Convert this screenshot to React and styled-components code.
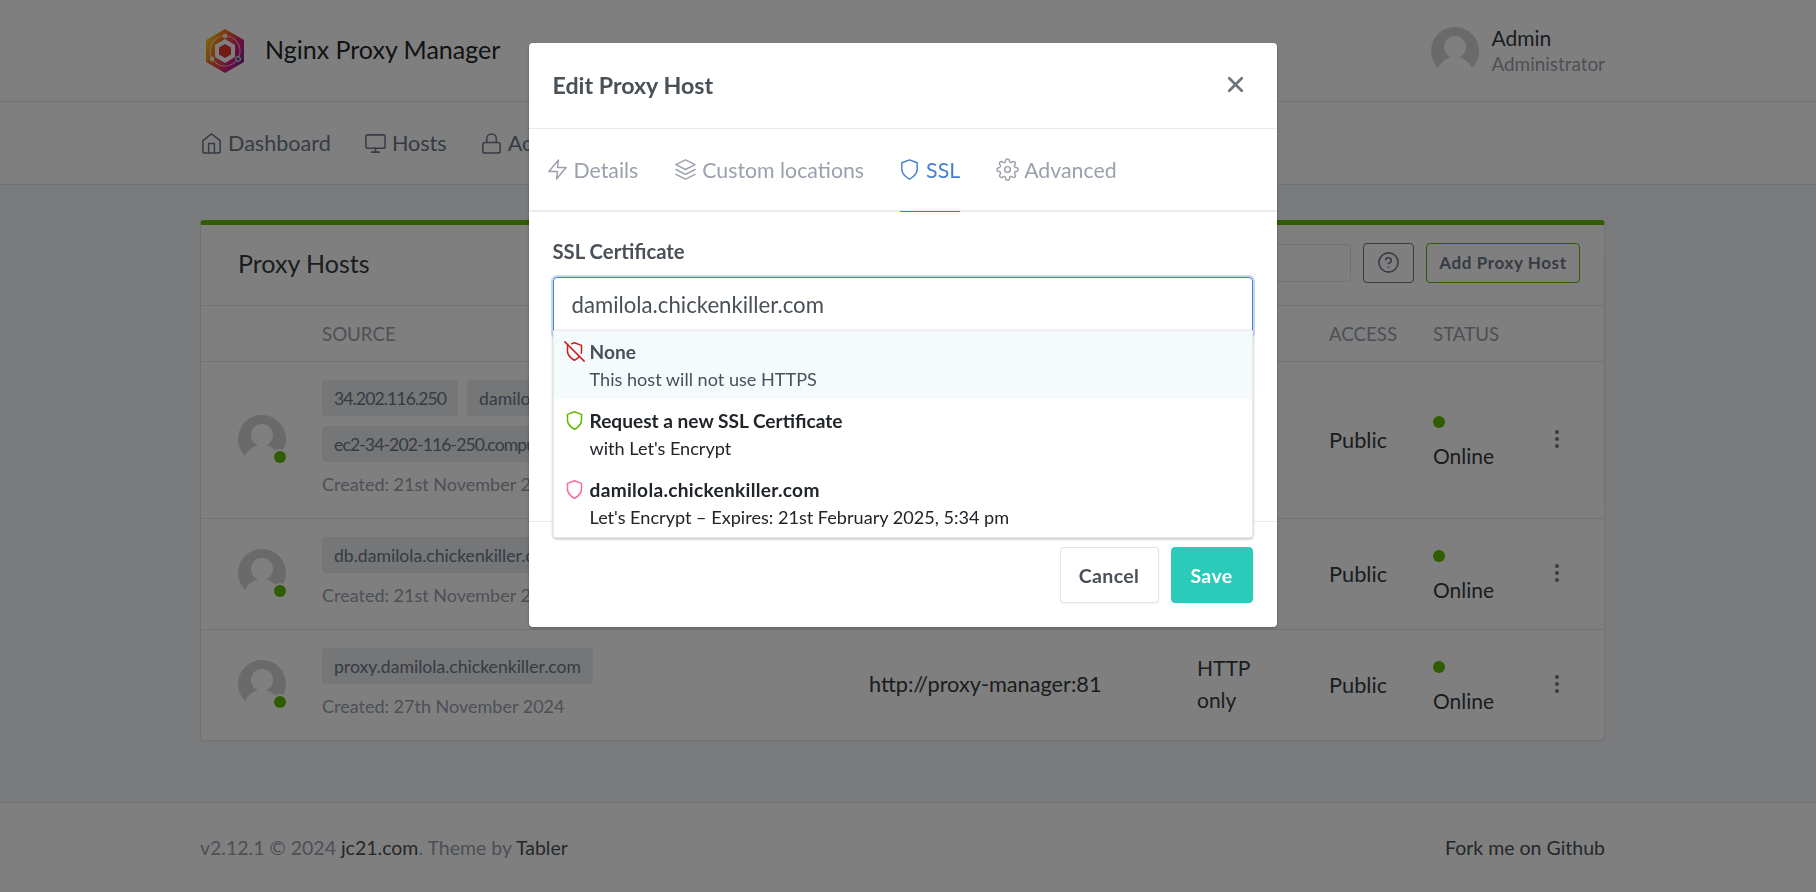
import React from "react";
import styled, { createGlobalStyle } from "styled-components";
import {
  FiHome,
  FiMonitor,
  FiLock,
  FiShield,
  FiUsers,
  FiBook,
  FiSettings,
  FiZap,
  FiLayers,
  FiShieldOff,
  FiX,
  FiHelpCircle,
  FiMoreVertical,
} from "react-icons/fi";

const GlobalStyle = createGlobalStyle`
  * { box-sizing: border-box; }
  html, body { margin: 0; height: 100%; overflow: hidden; }
  body {
    background: #f5f7fb;
    color: #495057;
    font-family: "Lato", "Noto Sans", sans-serif;
    font-size: 17.5px;
  }
`;

const Page = styled.div`
  min-height: 892px;
  display: flex;
  flex-direction: column;
`;

const Container = styled.div`
  padding: 0 211px 0 200px;
  display: flex;
  align-items: center;
  justify-content: space-between;
  width: 100%;
`;

const Header = styled.header`
  height: 102px;
  background: #fff;
  border-bottom: 1px solid rgba(0, 40, 100, 0.12);
  display: flex;
`;

const Brand = styled.div`
  display: flex;
  align-items: center;
  gap: 19px;
  margin-left: 4px;
  font-size: 25px;
  color: #212529;
`;

const BrandName = styled.span`
  margin-bottom: 4px;
`;

const User = styled.div`
  display: flex;
  align-items: center;
  gap: 12px;
`;

const UserName = styled.div`
  font-size: 21px;
  line-height: 26px;
  color: #343a40;
`;

const UserRole = styled.div`
  font-size: 18.9px;
  line-height: 26px;
  color: #9aa0ac;
`;

const Nav = styled.nav`
  height: 83px;
  background: #fff;
  border-bottom: 1px solid rgba(0, 40, 100, 0.12);
  display: flex;
`;

const NavList = styled.div`
  display: flex;
  align-items: center;
  gap: 33px;
  height: 74px;
  font-size: 21.6px;
  color: #6e7687;
`;

const NavItem = styled.span`
  display: flex;
  align-items: center;
  gap: 5px;
  white-space: nowrap;
  svg { width: 23px; height: 23px; stroke-width: 1.6; }
`;

const Main = styled.main`
  padding: 35px 211px 0 200px;
`;

const Card = styled.section`
  height: 521px;
  background: #fff;
  border: 1px solid rgba(0, 40, 100, 0.12);
  border-top: 5px solid #5eba00;
  border-radius: 4px;
  box-shadow: 0 1px 2px rgba(0, 0, 0, 0.05);
`;

const CardHead = styled.div`
  height: 81px;
  display: flex;
  align-items: center;
  justify-content: space-between;
  padding: 0 24px 4px 37px;
  border-bottom: 1px solid rgba(0, 40, 100, 0.12);
`;

const CardTitle = styled.h3`
  margin: 0;
  font-size: 25px;
  font-weight: 400;
  color: #343a40;
`;

const Tools = styled.div`
  display: flex;
  align-items: center;
  gap: 12px;
`;

const Search = styled.div`
  width: 200px;
  height: 38px;
  border: 1px solid rgba(0, 40, 100, 0.12);
  border-radius: 4px;
`;

const ToolButton = styled.div`
  height: 40px;
  width: ${(p) => p.$width}px;
  padding-bottom: 2px;
  display: flex;
  align-items: center;
  justify-content: center;
  border: 1px solid ${(p) => p.$border};
  border-radius: 4px;
  color: #6e7687;
  font-size: 17px;
  font-weight: 700;
  letter-spacing: 0.6px;
  svg { width: 23px; height: 23px; stroke-width: 1.7; }
`;

const columns = "121px 547px 328px 132px 104px 1fr";

const TableHead = styled.div`
  height: 56px;
  display: grid;
  grid-template-columns: ${columns};
  align-items: center;
  border-bottom: 1px solid rgba(0, 40, 100, 0.12);
  font-size: 18.7px;
  color: #9aa0ac;
`;

const HeadCell = styled.div`
  text-transform: uppercase;
`;

const Row = styled.div`
  display: grid;
  grid-template-columns: ${columns};
  align-items: center;
  padding: 18px 0 20px;
  border-bottom: ${(p) => (p.$last ? "none" : "1px solid rgba(0, 40, 100, 0.12)")};
  color: #343a40;
  font-size: 21px;
`;

const AvatarCell = styled.div`
  padding-left: 37px;
`;

const AvatarWrap = styled.div`
  position: relative;
  width: 48px;
  height: 48px;
`;

const AvatarDot = styled.span`
  position: absolute;
  right: 0;
  bottom: 0;
  width: 12px;
  height: 12px;
  border-radius: 50%;
  background: #5eba00;
  box-shadow: 0 0 0 2px #fff;
`;

const Badges = styled.div`
  display: flex;
  flex-wrap: wrap;
  gap: 10px 9px;
  margin-bottom: 9px;
`;

const Badge = styled.span`
  height: 36px;
  padding: 0 12px;
  display: flex;
  align-items: center;
  background: #e9ecef;
  border-radius: 4px;
  color: #6e7687;
  font-size: 17.6px;
  letter-spacing: ${(p) => (p.$tight ? "-0.9px" : "0")};
  white-space: nowrap;
`;

const Created = styled.div`
  line-height: 27px;
  font-size: 18px;
  color: #9aa0ac;
`;

const Target = styled.div`
  font-size: 21.7px;
`;

const Access = styled.div`
  font-size: 21.8px;
`;

const StatusCell = styled.div`
  display: grid;
  grid-template-columns: 112px 1fr;
  align-items: center;
`;

const Status = styled.div`
  padding-top: 5px;
`;

const StatusDot = styled.span`
  display: block;
  width: 12px;
  height: 12px;
  margin-bottom: 17px;
  border-radius: 50%;
  background: #5eba00;
`;

const StatusText = styled.div`
  line-height: 22px;
`;

const Wrapped = styled.div`
  line-height: 32px;
  width: 60px;
`;

const RowMenu = styled.div`
  color: #6e7687;
  display: flex;
  svg { width: 24px; height: 24px; }
`;

const Footer = styled.footer`
  margin-top: auto;
  height: 90px;
  background: #fff;
  border-top: 1px solid rgba(0, 40, 100, 0.12);
  display: flex;
  font-size: 19.5px;
  color: #9aa0ac;
`;

const FooterLink = styled.span`
  color: #495057;
`;

const Backdrop = styled.div`
  position: fixed;
  inset: 0;
  padding: 43px 11px 0 0;
  display: flex;
  justify-content: center;
  align-items: flex-start;
  background: rgba(0, 0, 0, 0.5);
`;

const Modal = styled.div`
  position: relative;
  width: 748px;
  height: 584px;
  display: flex;
  flex-direction: column;
  background: #fff;
  border-radius: 4px;
  box-shadow: 0 1px 3px rgba(0, 0, 0, 0.3);
`;

const ModalHead = styled.div`
  height: 86px;
  flex-shrink: 0;
  display: flex;
  align-items: center;
  justify-content: space-between;
  padding: 0 24px 2px;
  border-bottom: 1px solid #e9ecef;
`;

const ModalTitle = styled.h5`
  margin: 0;
  font-size: 23.2px;
  font-weight: 700;
  color: #495057;
`;

const CloseIcon = styled(FiX)`
  width: 25px;
  height: 25px;
  stroke-width: 2.6;
  color: #6c757d;
  margin-right: 5px;
`;

const Tabs = styled.div`
  height: 83px;
  flex-shrink: 0;
  display: flex;
  gap: 36px;
  padding-left: 17px;
  border-bottom: 2px solid #e9ecef;
`;

const Tab = styled.div`
  height: 83px;
  display: flex;
  align-items: center;
  gap: 5px;
  padding-bottom: 1px;
  font-size: 21.3px;
  color: ${(p) => (p.$active ? "#467fcf" : "#9aa0ac")};
  border-bottom: 1px solid ${(p) => (p.$active ? "#467fcf" : "transparent")};
  svg {
    width: 23px;
    height: 23px;
    stroke-width: 1.5;
    margin-left: ${(p) => (p.$active ? "-2px" : "0")};
  }
`;

const ModalBody = styled.div`
  position: relative;
  flex: 1;
  padding: 24px 24px 0;
  border-bottom: 1px solid #e9ecef;
`;

const Label = styled.div`
  font-size: 20.3px;
  font-weight: 700;
  line-height: 30px;
  margin-bottom: 11px;
  color: #495057;
`;

const SelectControl = styled.div`
  height: 60px;
  padding: 0 0 6px 18px;
  display: flex;
  align-items: center;
  border: 1px solid #467fcf;
  border-radius: 4px;
  box-shadow: 0 0 0 2px rgba(70, 127, 207, 0.3);
  font-size: 22.2px;
  color: #495057;
`;

const Dropdown = styled.div`
  position: absolute;
  top: 118px;
  left: 24px;
  right: 24px;
  background: #fff;
  border: 1px solid #e9ecef;
  border-radius: 0 0 4px 4px;
  box-shadow: 0 1px 3px rgba(0, 0, 0, 0.3);
`;

const Option = styled.div`
  height: ${(p) => (p.$active ? "68px" : "69px")};
  display: flex;
  gap: 3px;
  padding: ${(p) => (p.$active ? "8px" : "9px")} 0 0 10px;
  background: ${(p) => (p.$active ? "#f5fafd" : "#fff")};
  color: ${(p) => (p.$active ? "#495057" : "#212529")};
  svg { width: 21px; height: 21px; margin-top: 2px; stroke-width: 1.7; flex-shrink: 0; }
`;

const OptionTitle = styled.div`
  font-size: 19.1px;
  font-weight: 700;
  line-height: 26px;
  padding-left: 2px;
  letter-spacing: ${(p) => (p.$wide ? "0.3px" : "0")};
`;

const OptionSub = styled.div`
  font-size: 18.1px;
  line-height: 28px;
  padding-left: 2px;
`;

const ModalFooter = styled.div`
  height: 105px;
  flex-shrink: 0;
  display: flex;
  justify-content: flex-end;
  gap: 12px;
  padding: 25px 24px 0;
`;

const FooterButton = styled.div`
  height: 56px;
  width: ${(p) => p.$width}px;
  display: flex;
  align-items: center;
  justify-content: center;
  border-radius: 4px;
  font-size: 19.5px;
  font-weight: 700;
  letter-spacing: 0.4px;
  color: ${(p) => (p.$primary ? "#fff" : "#495057")};
  background: ${(p) => (p.$primary ? "#2bcbba" : "#fff")};
  border: 1px solid ${(p) => (p.$primary ? "#2bcbba" : "rgba(0, 40, 100, 0.12)")};
  box-shadow: 0 1px 2px rgba(0, 0, 0, 0.05);
`;

const Logo = () => (
  <svg width="42" height="46" viewBox="0 0 40 46">
    <defs>
      <linearGradient id="logoGrad" x1="0" y1="0.2" x2="1" y2="0.8">
        <stop offset="0" stopColor="#f5d90a" />
        <stop offset="0.35" stopColor="#f5631f" />
        <stop offset="0.7" stopColor="#d81b7a" />
        <stop offset="1" stopColor="#6a2c9c" />
      </linearGradient>
    </defs>
    <polygon points="20,1 39,12 39,34 20,45 1,34 1,12" fill="url(#logoGrad)" />
    <circle cx="20" cy="23" r="15" fill="none" stroke="#fff" strokeOpacity="0.6" strokeWidth="1.2" />
    <polygon points="20,11 30,17 30,29 20,35 10,29 10,17" fill="#fff" />
    <polygon points="20,16 26,19.5 26,26.5 20,30 14,26.5 14,19.5" fill="#e8342a" />
    <circle cx="20" cy="8" r="2.4" fill="#fff" fillOpacity="0.8" />
    <circle cx="7" cy="31" r="2.4" fill="#fff" fillOpacity="0.8" />
    <circle cx="33" cy="31" r="2.4" fill="#6a4a8c" stroke="#fff" />
  </svg>
);

const Avatar = () => (
  <svg width="48" height="48" viewBox="0 0 48 48">
    <circle cx="24" cy="24" r="24" fill="#d4d4d4" />
    <circle cx="24" cy="20" r="11" fill="#fff" />
    <ellipse cx="24" cy="47" rx="18" ry="17" fill="#fff" />
  </svg>
);

const hosts = [
  {
    names: [
      { text: "34.202.116.250", tight: true },
      { text: "damilola.chickenkiller.com" },
      { text: "ec2-34-202-116-250.compute-1.amazonaws.com", tight: true },
    ],
    created: "Created: 21st November 2024",
    target: "http://34.202.116.250:80",
    ssl: "Let's Encrypt",
  },
  {
    names: [{ text: "db.damilola.chickenkiller.com" }],
    created: "Created: 21st November 2024",
    target: "http://pgadmin:80",
    ssl: "Let's Encrypt",
  },
  {
    names: [{ text: "proxy.damilola.chickenkiller.com" }],
    created: "Created: 27th November 2024",
    target: "http://proxy-manager:81",
    ssl: "HTTP only",
  },
];

const navItems = [
  [FiHome, "Dashboard"],
  [FiMonitor, "Hosts"],
  [FiLock, "Access Lists"],
  [FiShield, "SSL Certificates"],
  [FiUsers, "Users"],
  [FiBook, "Audit Log"],
  [FiSettings, "Settings"],
];

const App = () => {
  return (
    <Page>
      <GlobalStyle />
      <Header>
        <Container>
          <Brand>
            <Logo />
            <BrandName>Nginx Proxy Manager</BrandName>
          </Brand>
          <User>
            <Avatar />
            <div>
              <UserName>Admin</UserName>
              <UserRole>Administrator</UserRole>
            </div>
          </User>
        </Container>
      </Header>
      <Nav>
        <Container>
          <NavList>
            {navItems.map(([Icon, label]) => (
              <NavItem key={label}>
                <Icon />
                {label}
              </NavItem>
            ))}
          </NavList>
        </Container>
      </Nav>
      <Main>
        <Card>
          <CardHead>
            <CardTitle>Proxy Hosts</CardTitle>
            <Tools>
              <Search />
              <ToolButton $width={51} $border="#6e7687">
                <FiHelpCircle />
              </ToolButton>
              <ToolButton $width={154} $border="#5eba00">
                Add Proxy Host
              </ToolButton>
            </Tools>
          </CardHead>
          <TableHead>
            <div />
            <HeadCell>Source</HeadCell>
            <HeadCell>Destination</HeadCell>
            <HeadCell>SSL</HeadCell>
            <HeadCell>Access</HeadCell>
            <HeadCell>Status</HeadCell>
          </TableHead>
          {hosts.map((host, i) => (
            <Row key={host.target} $last={i === hosts.length - 1}>
              <AvatarCell>
                <AvatarWrap>
                  <Avatar />
                  <AvatarDot />
                </AvatarWrap>
              </AvatarCell>
              <div>
                <Badges>
                  {host.names.map((name) => (
                    <Badge key={name.text} $tight={name.tight}>
                      {name.text}
                    </Badge>
                  ))}
                </Badges>
                <Created>{host.created}</Created>
              </div>
              <Target>{host.target}</Target>
              <Wrapped>{host.ssl}</Wrapped>
              <Access>Public</Access>
              <StatusCell>
                <Status>
                  <StatusDot />
                  <StatusText>Online</StatusText>
                </Status>
                <RowMenu>
                  <FiMoreVertical />
                </RowMenu>
              </StatusCell>
            </Row>
          ))}
        </Card>
      </Main>
      <Footer>
        <Container>
          <div>
            v2.12.1 © 2024 <FooterLink>jc21.com</FooterLink>. Theme by <FooterLink>Tabler</FooterLink>
          </div>
          <FooterLink>Fork me on Github</FooterLink>
        </Container>
      </Footer>
      <Backdrop>
        <Modal>
          <ModalHead>
            <ModalTitle>Edit Proxy Host</ModalTitle>
            <CloseIcon />
          </ModalHead>
          <Tabs>
            <Tab>
              <FiZap />
              Details
            </Tab>
            <Tab>
              <FiLayers />
              Custom locations
            </Tab>
            <Tab $active>
              <FiShield />
              SSL
            </Tab>
            <Tab>
              <FiSettings />
              Advanced
            </Tab>
          </Tabs>
          <ModalBody>
            <Label>SSL Certificate</Label>
            <SelectControl>damilola.chickenkiller.com</SelectControl>
            <Dropdown>
              <Option $active>
                <FiShieldOff color="#cd201f" />
                <div>
                  <OptionTitle>None</OptionTitle>
                  <OptionSub>This host will not use HTTPS</OptionSub>
                </div>
              </Option>
              <Option>
                <FiShield color="#5eba00" />
                <div>
                  <OptionTitle>Request a new SSL Certificate</OptionTitle>
                  <OptionSub>with Let's Encrypt</OptionSub>
                </div>
              </Option>
              <Option>
                <FiShield color="#f66d9b" />
                <div>
                  <OptionTitle $wide>damilola.chickenkiller.com</OptionTitle>
                  <OptionSub>Let's Encrypt – Expires: 21st February 2025, 5:34 pm</OptionSub>
                </div>
              </Option>
            </Dropdown>
          </ModalBody>
          <ModalFooter>
            <FooterButton $width={99}>Cancel</FooterButton>
            <FooterButton $width={82} $primary>
              Save
            </FooterButton>
          </ModalFooter>
        </Modal>
      </Backdrop>
    </Page>
  );
};

export default App;
